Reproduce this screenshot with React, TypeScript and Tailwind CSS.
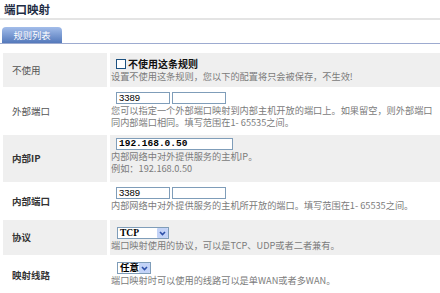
import * as React from "react"

type RowProps = {
  label: string
  bold?: boolean
  gray?: boolean
  h: string
  pt: string
  children: React.ReactNode
}

function Row({ label, bold, gray, h, pt, children }: RowProps) {
  const bg = gray ? "bg-[#efefef]" : "bg-white"
  return (
    <>
      <div
        className={`${bg} ${h} flex items-center pl-[9px] text-[9.5px] ${
          bold ? "font-bold text-[#333]" : "text-[#555]"
        }`}
      >
        {label}
      </div>
      <div className={`${bg} ${h} ${pt} flex flex-col pl-[1px]`}>{children}</div>
    </>
  )
}

function Desc({ children }: { children: React.ReactNode }) {
  return <div className="text-[9.2px] leading-[12px] text-[#7b7b7b]">{children}</div>
}

function TextBox({ value, w, mono }: { value?: string; w: string; mono?: boolean }) {
  return (
    <div
      className={`${w} h-[12px] border border-[#7f9db9] bg-white pl-[2px] text-[9.5px] leading-[10px] text-black ${
        mono ? "font-['Liberation_Mono',monospace] font-bold" : "font-['Liberation_Sans',sans-serif]"
      }`}
    >
      {value}
    </div>
  )
}

function Select({ value, w }: { value: string; w: string }) {
  return (
    <div className={`${w} ml-[6px] flex h-[12px] items-center justify-between border border-[#7f9db9] bg-white`}>
      <span className="pl-[2px] font-['Liberation_Serif','Noto_Sans_CJK_SC',serif] text-[9.5px] font-bold leading-[10px] text-black">
        {value}
      </span>
      <span className="flex h-[10px] w-[11px] items-center justify-center rounded-[1px] bg-[#c3d3f7]">
        <svg width="7" height="5" viewBox="0 0 7 5">
          <path d="M1 1 L3.5 3.5 L6 1" fill="none" stroke="#2c4fa8" strokeWidth="1.6" />
        </svg>
      </span>
    </div>
  )
}

export default function App() {
  return (
    <div className="h-[293px] w-[440px] overflow-hidden bg-white font-['Noto_Sans_CJK_SC',sans-serif]">
      <div className="h-[20px] border-b-2 border-[#e4e4e4] pl-[4px] text-[11.5px] font-bold leading-[19px] text-[#1f2d45]">
        端口映射
      </div>
      <div className="mt-[7px] flex h-[17px] items-end border-b border-[#9dabd0] pl-[2px]">
        <div className="h-[16px] w-[60px] rounded-t-[4px] bg-gradient-to-b from-[#a3bdea] to-[#5479bb] text-center text-[9.3px] leading-[16px] text-white">
          规则列表
        </div>
      </div>
      <div className="mt-[9px] grid grid-cols-[104px_1fr] gap-x-[3px] gap-y-[2px] pl-[3px]">
        <Row label="不使用" gray h="h-[34px]" pt="pt-[5px]">
          <div className="flex h-[12px] items-center">
            <span className="ml-[5px] h-[10px] w-[10px] border border-[#1c5180] bg-white" />
            <span className="ml-[2px] text-[10px] font-bold leading-[12px] text-[#111]">不使用这条规则</span>
          </div>
          <Desc>设置不使用这条规则，您以下的配置将只会被保存，不生效!</Desc>
        </Row>
        <Row label="外部端口" h="h-[44px]" pt="pt-[3px]">
          <div className="ml-[5px] flex gap-[2px]">
            <TextBox value="3389" w="w-[54px]" />
            <TextBox w="w-[54px]" />
          </div>
          <Desc>您可以指定一个外部端口映射到内部主机开放的端口上。如果留空，则外部端口同内部端口相同。填写范围在1- 65535之间。</Desc>
        </Row>
        <Row label="内部IP" bold gray h="h-[47px]" pt="pt-[3px]">
          <div className="ml-[5px] flex">
            <TextBox value="192.168.0.50" w="w-[117px]" mono />
          </div>
          <Desc>内部网络中对外提供服务的主机IP。</Desc>
          <Desc>例如：192.168.0.50</Desc>
        </Row>
        <Row label="内部端口" bold h="h-[34px]" pt="pt-[3px]">
          <div className="ml-[5px] flex gap-[2px]">
            <TextBox value="3389" w="w-[54px]" />
            <TextBox w="w-[54px]" />
          </div>
          <Desc>内部网络中对外提供服务的主机所开放的端口。填写范围在1- 65535之间。</Desc>
        </Row>
        <Row label="协议" bold gray h="h-[35px]" pt="pt-[7px]">
          <Select value="TCP" w="w-[52px]" />
          <Desc>端口映射使用的协议，可以是TCP、UDP或者二者兼有。</Desc>
        </Row>
        <Row label="映射线路" bold h="h-[36px]" pt="pt-[5px]">
          <Select value="任意" w="w-[34px]" />
          <Desc>端口映射时可以使用的线路可以是单WAN或者多WAN。</Desc>
        </Row>
      </div>
    </div>
  )
}
